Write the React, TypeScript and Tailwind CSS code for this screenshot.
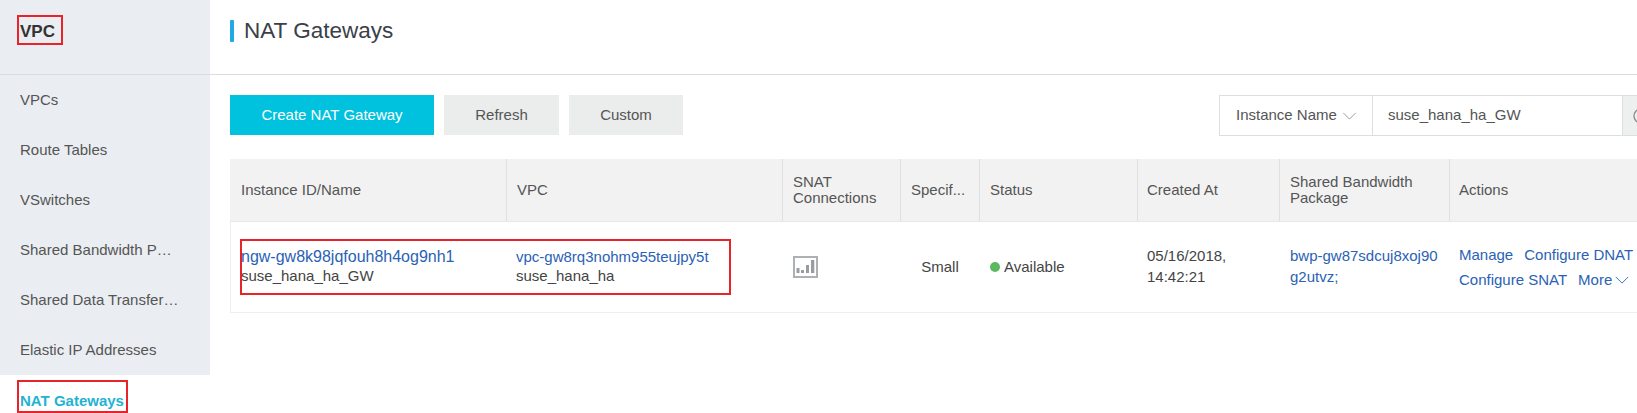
import React from "react";

const font = { fontFamily: '"Liberation Sans", Arial, sans-serif' };
const navItems = ["VPCs", "Route Tables", "VSwitches", "Shared Bandwidth P…", "Shared Data Transfer…", "Elastic IP Addresses"];
const cols = "grid-cols-[277px_276px_118px_79px_158px_142px_170px_1fr]";

function Head({ children, last, pad = "pl-[10px]" }: { children: React.ReactNode; last?: boolean; pad?: string }) {
  return (
    <div className={`flex items-center ${pad} leading-[16px] text-[#555] ${last ? "" : "border-r border-[#dfdfdf]"}`}>
      <div>{children}</div>
    </div>
  );
}

function Chevron({ className, stroke }: { className: string; stroke: string }) {
  return (
    <svg viewBox="0 0 16 9" className={className} fill="none" stroke={stroke} strokeWidth="1">
      <path d="M1 1l7 7 7-7" />
    </svg>
  );
}

export default function App() {
  return (
    <div style={font} className="flex h-[413px] w-[1637px] overflow-hidden bg-white text-[15px] text-[#444]">
      <aside className="w-[210px] shrink-0">
        <div className="h-[375px] bg-[#eaedf1]">
          <div className="h-[75px] border-b border-[#d9dce0] pt-[15px] pl-[17px]">
            <span className="inline-block h-[30px] w-[46px] border-[2px] border-[#e8232a] pt-[1px] pl-[1px] text-[17px] leading-[27px] font-bold text-[#333]">VPC</span>
          </div>
          {navItems.map((n) => (
            <div key={n} className="flex h-[50px] items-center pl-[20px] text-[#555]">{n}</div>
          ))}
        </div>
        <div className="pt-[5px] pl-[17px]">
          <span className="inline-block h-[33px] border-[2px] border-[#e8232a] pt-[5px] pr-[2px] pl-[1px] text-[15px] leading-[24px] font-bold whitespace-nowrap text-[#1fb3d3]">
            <span className="relative top-[2px]">NAT Gateways</span>
          </span>
        </div>
      </aside>
      <main className="min-w-0 flex-1">
        <div className="flex h-[75px] items-start border-b border-[#dcdcdc] pt-[20px] pl-[20px]">
          <div className="mr-[10px] h-[22px] w-[4px] rounded-[1px] bg-[#22a8e3]" />
          <h1 className="text-[22.5px] leading-[22px] font-normal text-[#3a4047]">NAT Gateways</h1>
        </div>
        <div className="flex items-start pt-[20px] pl-[20px]">
          <button className="h-[40px] w-[204px] bg-[#00c1de] text-[15px] text-white">Create NAT Gateway</button>
          <button className="ml-[10px] h-[40px] w-[115px] bg-[#eaedec] text-[15px] text-[#555]">Refresh</button>
          <button className="ml-[10px] h-[40px] w-[114px] bg-[#eaedec] text-[15px] text-[#555]">Custom</button>
          <div className="ml-auto flex h-[41px] w-[418px] shrink-0 border border-[#dcdfe0]">
            <div className="flex w-[153px] shrink-0 items-center border-r border-[#dcdfe0] pl-[16px] text-[#555]">
              Instance Name
              <Chevron className="ml-[5px] h-[8px] w-[15px]" stroke="#8a8f96" />
            </div>
            <div className="flex w-[249px] shrink-0 items-center pl-[15px] text-[#555]">suse_hana_ha_GW</div>
            <div className="flex flex-1 items-center border-l border-[#dcdfe0] bg-[#eef0ef] pl-[10px]">
              <svg viewBox="0 0 16 16" className="h-[16px] w-[16px] shrink-0" fill="none" stroke="#888" strokeWidth="1.3">
                <circle cx="8" cy="8" r="7" />
              </svg>
            </div>
          </div>
        </div>
        <div className="relative mt-[23px] ml-[20px]">
          <div className={`grid h-[63px] ${cols} border-b border-[#e8e8e8] bg-[#f2f2f2]`}>
            <Head pad="pl-[11px]">Instance ID/Name</Head>
            <Head>VPC</Head>
            <Head>SNAT<br />Connections</Head>
            <Head>Specif...</Head>
            <Head>Status</Head>
            <Head pad="pl-[9px]">Created At</Head>
            <Head>Shared Bandwidth<br />Package</Head>
            <Head last pad="pl-[9px]">Actions</Head>
          </div>
          <div className={`grid h-[91px] ${cols} border-b border-l border-[#eeeeee]`}>
            <div className="flex flex-col justify-center pb-[2px] pl-[10px] leading-[19px] text-[#444]">
              <span className="text-[16px] text-[#2a62b5]">ngw-gw8k98jqfouh8h4og9nh1</span>
              <span>suse_hana_ha_GW</span>
            </div>
            <div className="flex flex-col justify-center pb-[2px] pl-[8px] leading-[19px]">
              <span className="text-[#2a62b5]">vpc-gw8rq3nohm955teujpy5t</span>
              <span>suse_hana_ha</span>
            </div>
            <div className="flex items-center pb-[1px] pl-[9px]">
              <svg viewBox="0 0 25 22" className="h-[22px] w-[25px]" fill="none">
                <rect x="1" y="1" width="23" height="20" stroke="#aeb1b4" strokeWidth="2" />
                <path d="M3.5 12h3v5h-3zM8 14h3v3H8zM13 9h3v8h-3zM18 4h3.3v13H18z" fill="#999da1" />
              </svg>
            </div>
            <div className="flex items-center justify-center pr-[3px]">Small</div>
            <div className="flex items-center pl-[9px]">
              <span className="mr-[4px] h-[10px] w-[10px] rounded-full bg-[#5cb85c]" />Available
            </div>
            <div className="flex items-center pb-[3px] pl-[8px] leading-[21px]">05/16/2018,<br />14:42:21</div>
            <div className="flex items-center pb-[3px] pl-[9px] leading-[21px] text-[#2a62b5]">bwp-gw87sdcuj8xoj90<br />g2utvz;</div>
            <div className="flex flex-col justify-center gap-[6px] pl-[8px] leading-[19px] whitespace-nowrap text-[#2a62b5]">
              <div><span>Manage</span><span className="ml-[11px]">Configure DNAT</span></div>
              <div className="flex items-center">
                <span>Configure SNAT</span><span className="ml-[11px]">More</span>
                <Chevron className="ml-[2px] h-[8px] w-[16px]" stroke="#2a62b5" />
              </div>
            </div>
          </div>
          <div className="absolute top-[80px] left-[10px] h-[56px] w-[491px] border-[2px] border-[#e8232a]" />
        </div>
      </main>
    </div>
  );
}
